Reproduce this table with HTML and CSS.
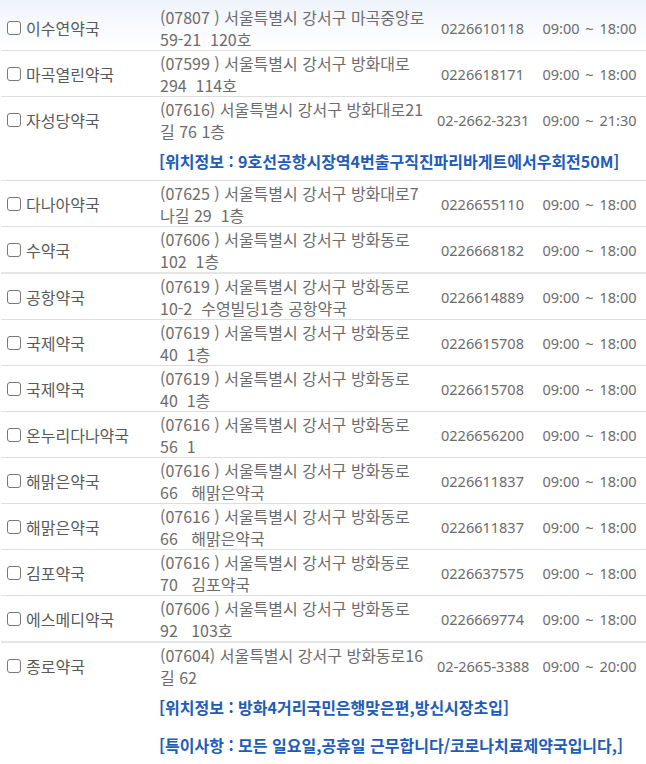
FILE: index.html
```html
<!DOCTYPE html>
<html lang="ko">
<head>
    <meta charset="UTF-8">
    <meta name="viewport" content="width=device-width, initial-scale=1.0">
    <title>약국 목록</title>
    <link rel="stylesheet" href="styles.css">
</head>
<body>

    <table class="list">
        <colgroup>
            <col class="c-name">
            <col class="c-addr">
            <col class="c-tel">
            <col class="c-time">
        </colgroup>
        <tbody>
            <tr>
                <td class="name"><label><input type="checkbox">이수연약국</label></td>
                <td class="addr">(07807 ) 서울특별시 강서구 마곡중앙로<br>59-21&nbsp;&nbsp;120호</td>
                <td class="tel">0226610118</td>
                <td class="time">09:00 ~ 18:00</td>
            </tr>
            <tr>
                <td class="name"><label><input type="checkbox">마곡열린약국</label></td>
                <td class="addr">(07599 ) 서울특별시 강서구 방화대로<br>294&nbsp;&nbsp;114호</td>
                <td class="tel">0226618171</td>
                <td class="time">09:00 ~ 18:00</td>
            </tr>
            <tr class="has-info">
                <td class="name"><label><input type="checkbox">자성당약국</label></td>
                <td class="addr">(07616) 서울특별시 강서구 방화대로21<br>길 76 1층</td>
                <td class="tel">02-2662-3231</td>
                <td class="time">09:00 ~ 21:30</td>
            </tr>
            <tr class="info">
                <td></td>
                <td colspan="3">[위치정보 : 9호선공항시장역4번출구직진파리바게트에서우회전50M]</td>
            </tr>
            <tr>
                <td class="name"><label><input type="checkbox">다나아약국</label></td>
                <td class="addr">(07625 ) 서울특별시 강서구 방화대로7<br>나길 29&nbsp;&nbsp;1층</td>
                <td class="tel">0226655110</td>
                <td class="time">09:00 ~ 18:00</td>
            </tr>
            <tr>
                <td class="name"><label><input type="checkbox">수약국</label></td>
                <td class="addr">(07606 ) 서울특별시 강서구 방화동로<br>102&nbsp;&nbsp;1층</td>
                <td class="tel">0226668182</td>
                <td class="time">09:00 ~ 18:00</td>
            </tr>
            <tr class="sep">
                <td class="name"><label><input type="checkbox">공항약국</label></td>
                <td class="addr">(07619 ) 서울특별시 강서구 방화동로<br>10-2&nbsp;&nbsp;수영빌딩1층 공항약국</td>
                <td class="tel">0226614889</td>
                <td class="time">09:00 ~ 18:00</td>
            </tr>
            <tr>
                <td class="name"><label><input type="checkbox">국제약국</label></td>
                <td class="addr">(07619 ) 서울특별시 강서구 방화동로<br>40&nbsp;&nbsp;1층</td>
                <td class="tel">0226615708</td>
                <td class="time">09:00 ~ 18:00</td>
            </tr>
            <tr>
                <td class="name"><label><input type="checkbox">국제약국</label></td>
                <td class="addr">(07619 ) 서울특별시 강서구 방화동로<br>40&nbsp;&nbsp;1층</td>
                <td class="tel">0226615708</td>
                <td class="time">09:00 ~ 18:00</td>
            </tr>
            <tr>
                <td class="name"><label><input type="checkbox">온누리다나약국</label></td>
                <td class="addr">(07616 ) 서울특별시 강서구 방화동로<br>56&nbsp;&nbsp;1</td>
                <td class="tel">0226656200</td>
                <td class="time">09:00 ~ 18:00</td>
            </tr>
            <tr>
                <td class="name"><label><input type="checkbox">해맑은약국</label></td>
                <td class="addr">(07616 ) 서울특별시 강서구 방화동로<br>66&nbsp;&nbsp;&nbsp;해맑은약국</td>
                <td class="tel">0226611837</td>
                <td class="time">09:00 ~ 18:00</td>
            </tr>
            <tr>
                <td class="name"><label><input type="checkbox">해맑은약국</label></td>
                <td class="addr">(07616 ) 서울특별시 강서구 방화동로<br>66&nbsp;&nbsp;&nbsp;해맑은약국</td>
                <td class="tel">0226611837</td>
                <td class="time">09:00 ~ 18:00</td>
            </tr>
            <tr>
                <td class="name"><label><input type="checkbox">김포약국</label></td>
                <td class="addr">(07616 ) 서울특별시 강서구 방화동로<br>70&nbsp;&nbsp;&nbsp;김포약국</td>
                <td class="tel">0226637575</td>
                <td class="time">09:00 ~ 18:00</td>
            </tr>
            <tr>
                <td class="name"><label><input type="checkbox">에스메디약국</label></td>
                <td class="addr">(07606 ) 서울특별시 강서구 방화동로<br>92&nbsp;&nbsp;&nbsp;103호</td>
                <td class="tel">0226669774</td>
                <td class="time">09:00 ~ 18:00</td>
            </tr>
            <tr class="sep has-info">
                <td class="name"><label><input type="checkbox">종로약국</label></td>
                <td class="addr">(07604) 서울특별시 강서구 방화동로16<br>길 62</td>
                <td class="tel">02-2665-3388</td>
                <td class="time">09:00 ~ 20:00</td>
            </tr>
            <tr class="info has-info">
                <td></td>
                <td colspan="3">[위치정보 : 방화4거리국민은행맞은편,방신시장초입]</td>
            </tr>
            <tr class="info">
                <td></td>
                <td colspan="3">[특이사항 : 모든 일요일,공휴일 근무합니다/코로나치료제약국입니다,]</td>
            </tr>
        </tbody>
    </table>

</body>
</html>
```

FILE: styles.css
```css
body {
    font-family: "Noto Sans CJK KR", "Noto Sans", sans-serif;
    background: linear-gradient(#eff3fa, #ffffff 48px) no-repeat;
    margin: 0;
    padding: 5px 0 0 1px;
    color: #6c6c6c;
}
.list {
    width: 645px;
    table-layout: fixed;
    border-collapse: collapse;
    font-size: 16px;
    line-height: 22px;
}
.c-name { width: 154px; }
.c-addr { width: 277px; }
.c-tel { width: 101px; }
.c-time { width: 113px; }
.list td {
    height: 45px;
    padding: 0 5px;
    border-bottom: 1px solid #dedede;
    vertical-align: middle;
}
.list tr.has-info td {
    border-bottom: none;
}
.list tr.sep td {
    border-top: 2px solid #e6e6e6;
}
.name {
    color: #595959;
    white-space: nowrap;
}
.name label {
    display: flex;
    align-items: center;
    gap: 5px;
}
.name input[type="checkbox"] {
    appearance: none;
    -webkit-appearance: none;
    width: 14px;
    height: 14px;
    margin: 0 0 0 1px;
    border: 1.5px solid #777;
    border-radius: 3px;
    background: #fff;
}
.addr {
    padding-left: 4px;
}
.tel,
.time {
    font-family: "Noto Sans", sans-serif;
    font-size: 14.5px;
    text-align: center;
    white-space: nowrap;
}
.time {
    word-spacing: 2px;
}
.info td {
    height: 22px;
    padding: 8px 5px 8px 4px;
    font-weight: bold;
    color: #1d5cb8;
    white-space: nowrap;
}
```
